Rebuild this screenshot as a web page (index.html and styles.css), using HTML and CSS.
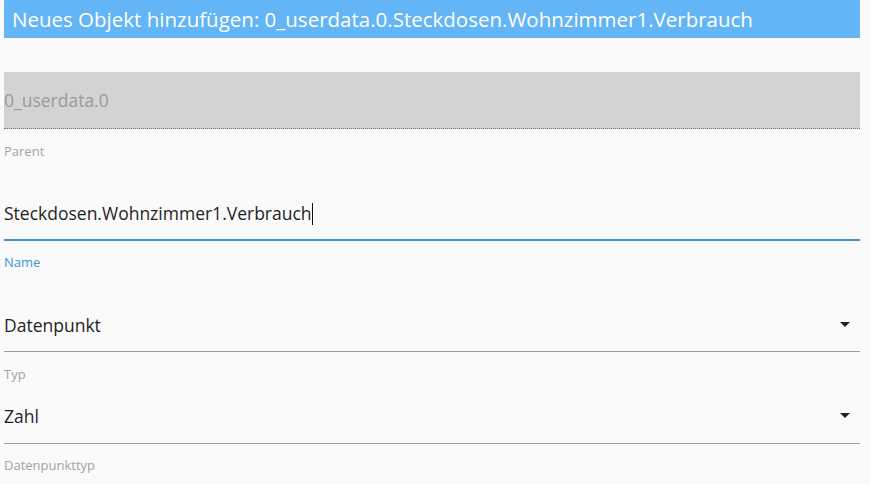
FILE: index.html
```html
<!DOCTYPE html>
<html lang="de">
<head>
  <meta charset="UTF-8" />
  <meta name="viewport" content="width=device-width, initial-scale=1.0"/>
  <title>Neues Objekt hinzufügen</title>
  <link rel="stylesheet" href="styles.css">
</head>
<body>
  <div class="dialog-title">Neues Objekt hinzufügen: 0_userdata.0.Steckdosen.Wohnzimmer1.Verbrauch</div>

  <div class="field field-parent">
    <div class="field-input disabled">0_userdata.0</div>
    <div class="field-label">Parent</div>
  </div>

  <div class="field field-name">
    <div class="field-input focused">Steckdosen.Wohnzimmer1.Verbrauch<span class="caret"></span></div>
    <div class="field-label active">Name</div>
  </div>

  <div class="field field-type">
    <div class="field-input select">Datenpunkt<span class="arrow"></span></div>
    <div class="field-label">Typ</div>
  </div>

  <div class="field field-common">
    <div class="field-input select">Zahl<span class="arrow"></span></div>
    <div class="field-label">Datenpunkttyp</div>
  </div>
</body>
</html>
```

FILE: styles.css
```css
:root {
  --bg: #fafafa;
  --title: #64b5f6;
  --accent: #3a96d2;
  --line: #9e9e9e;
  --muted: #a3a3a3;
  --text: #1f1f1f;
}

body {
  font-family: 'Open Sans', 'Noto Sans', sans-serif;
  background: var(--bg);
  color: var(--text);
  margin: 0;
  padding: 0 10px 0 4px;
}

.dialog-title {
  background: var(--title);
  color: white;
  font-size: 20.5px;
  height: 38px;
  line-height: 38px;
  padding-left: 8px;
  white-space: nowrap;
}

.field-input {
  position: relative;
  font-size: 17.5px;
  line-height: 24px;
  padding-bottom: 14px;
  border-bottom: 1px solid var(--line);
}

.field-label {
  font-size: 13px;
  line-height: 16px;
  margin-top: 14px;
  color: var(--muted);
}

.field-parent {
  margin-top: 34px;
}

.field-input.disabled {
  background: #d3d3d3;
  color: #9a9a9a;
  padding: 16px 0;
  border-bottom: 1px dotted #707070;
}

.field-name {
  margin-top: 42px;
}

.field-input.focused {
  border-bottom: 2px solid var(--accent);
}

.field-label.active {
  color: var(--accent);
  margin-top: 13px;
}

.caret {
  display: inline-block;
  width: 1px;
  height: 22px;
  background: #111;
  vertical-align: -5px;
}

.field-type {
  margin-top: 43px;
}

.field-common {
  margin-top: 22px;
}

.field-common .field-input {
  padding-bottom: 15px;
}

.field-common .field-label {
  margin-top: 13px;
}

.arrow {
  position: absolute;
  right: 10px;
  top: 9px;
  width: 0;
  height: 0;
  border-left: 5px solid transparent;
  border-right: 5px solid transparent;
  border-top: 5px solid #222;
}
```
